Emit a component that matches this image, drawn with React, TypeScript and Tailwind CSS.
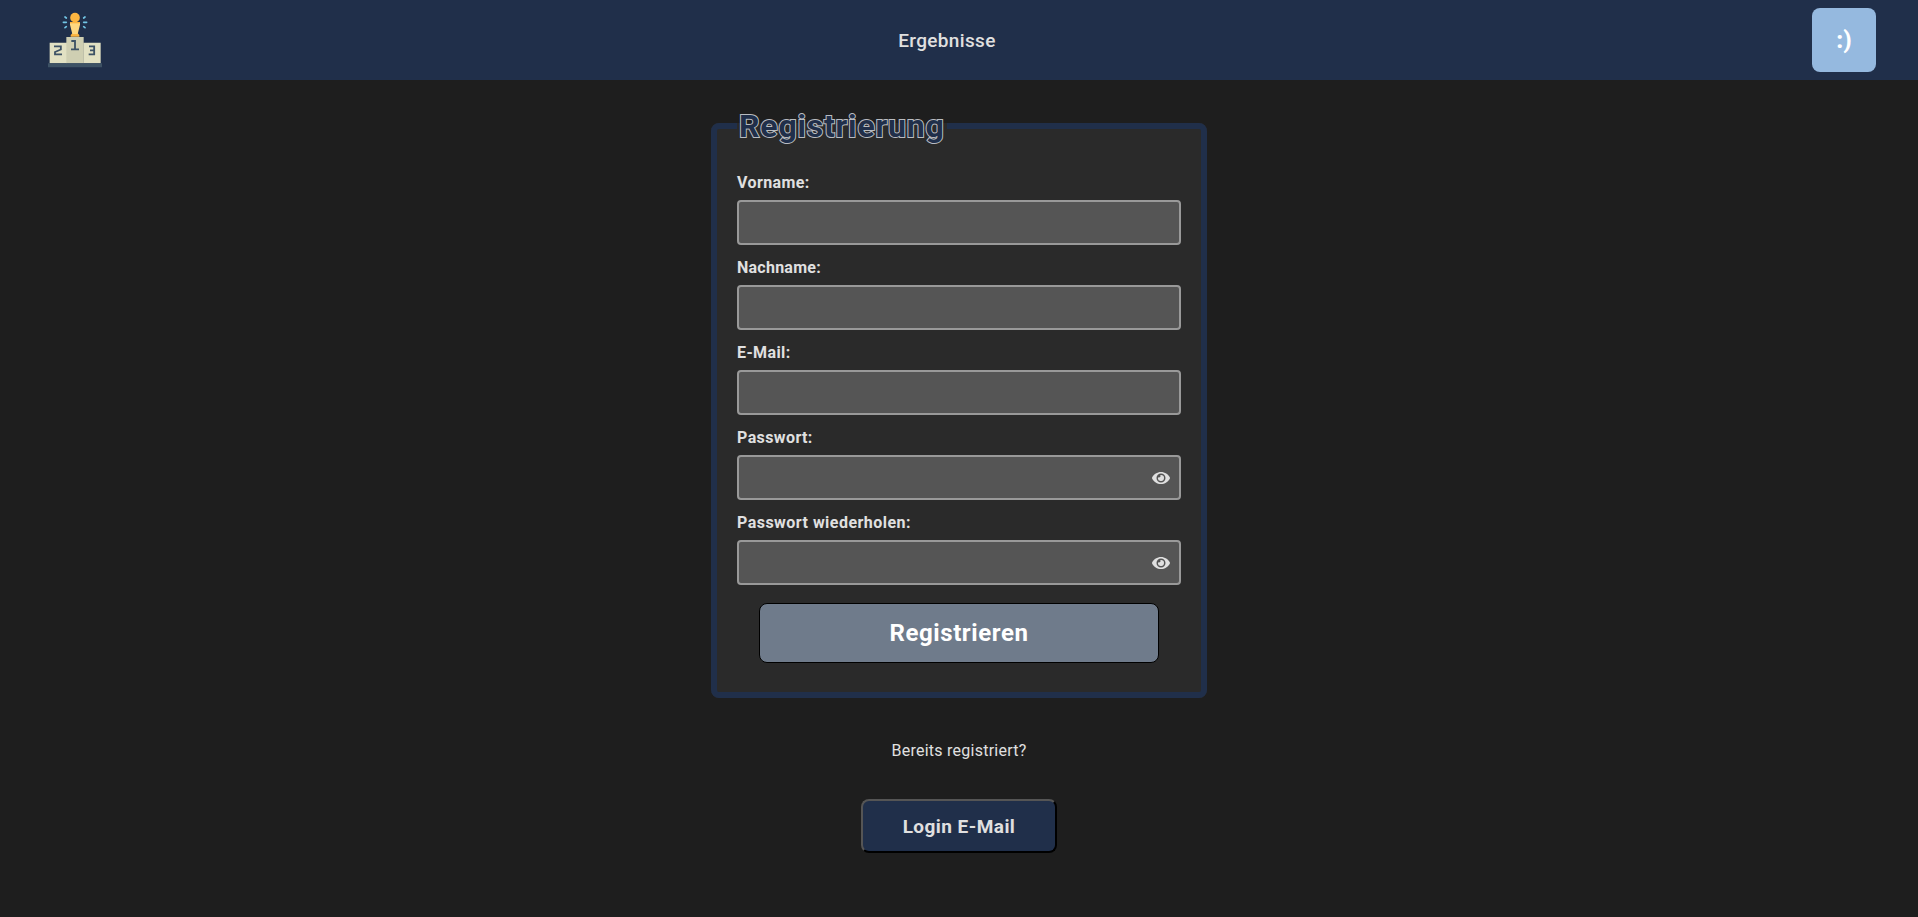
import { FaEye } from "react-icons/fa";

const fields = [
  { label: "Vorname:", spacing: "tracking-[0.4px]", secret: false },
  { label: "Nachname:", spacing: "tracking-[0.25px]", secret: false },
  { label: "E-Mail:", spacing: "tracking-[0.4px]", secret: false },
  { label: "Passwort:", spacing: "tracking-[0.4px]", secret: true },
  { label: "Passwort wiederholen:", spacing: "tracking-[0.47px]", secret: true },
];

function Logo() {
  return (
    <svg className="h-14 w-[54px]" viewBox="24 36 162 168" fill="none">
      <path fill="#fdb641" d="M92 110v-5l5-5h16l5 5v5z" />
      <path fill="#ffd880" d="M90 66h30v8l-7 28H97l-7-28z" />
      <path fill="#fdb641" d="M90 66h30v4H90z" />
      <circle cx="105" cy="53" r="14.5" fill="#fdb641" />
      <path
        stroke="#72c6e5"
        strokeWidth="5"
        strokeLinecap="round"
        d="m75 51 4 3m-9 13h9m-4 16 4-3M135 51l-4 3m9 13h-9m4 16-4-3"
      />
      <path fill="#e2e1c3" d="M29 128h52v62H29zM130 128h52v62h-52z" />
      <path fill="#cfcfb2" d="M79 111h52v79H79z" />
      <path fill="#3d5265" d="M24 190h162v12H24z" />
      <path
        stroke="#3d5265"
        strokeWidth="5.5"
        d="M42 139h20.500v9.500L45 156v7h21M94 123h11v25m-12 0h24M147 139h15.500v24H146m4-12h12"
      />
    </svg>
  );
}

function Header() {
  return (
    <header className="grid h-20 grid-cols-[1fr_auto_1fr] items-center bg-[#202f4a] pr-[42px] pl-12">
      <Logo />
      <a href="#" className="-translate-x-[15px] pt-0.5 text-[19px] font-medium tracking-[0.35px]">
        Ergebnisse
      </a>
      <button className="size-16 justify-self-end rounded-lg bg-[#95b9df] text-2xl font-extrabold text-white">
        :)
      </button>
    </header>
  );
}

export default function App() {
  return (
    <div className="min-h-screen bg-[#1e1e1e] font-['Roboto',sans-serif] text-[#e0e0e0]">
      <Header />
      <main className="flex flex-col items-center pt-[21px]">
        <fieldset className="h-[597px] w-[496px] rounded-lg border-6 border-[#202f4a] bg-[#2a2a2a] px-5">
          <legend className="h-[50px] w-[210px] px-0.5 text-[32px] leading-[50px] font-bold tracking-[0.8px] whitespace-nowrap text-[#202f4a] [-webkit-text-stroke:2px_#b9bcc1] [paint-order:stroke_fill]">
            Registrierung
          </legend>
          <div className="flex flex-col gap-[11px] pt-5">
            {fields.map((field) => (
              <label key={field.label} className="flex flex-col gap-[5px]">
                <span className={`h-6 text-base leading-6 font-bold ${field.spacing}`}>
                  {field.label}
                </span>
                <span className="flex h-[45px] items-center rounded border-2 border-[#999] bg-[#555] pr-[9px]">
                  <input
                    type={field.secret ? "password" : "text"}
                    className="h-full min-w-0 flex-1 bg-transparent px-2 outline-none"
                  />
                  {field.secret && <FaEye className="size-[18px]" />}
                </span>
              </label>
            ))}
          </div>
          <div className="flex justify-center pt-[18px]">
            <button className="h-[60px] w-[400px] rounded-lg border border-black bg-[#6f7b8b] text-2xl font-bold tracking-[0.6px] text-white">
              Registrieren
            </button>
          </div>
        </fieldset>
        <p className="mt-10 h-[25px] text-base leading-[25px] tracking-[0.25px]">Bereits registriert?</p>
        <button className="mt-9 h-[54px] w-[196px] rounded-lg border-2 border-t-[#555] border-r-black border-b-black border-l-[#555] bg-[#202f4a] pt-0.5 text-[19px] font-bold tracking-[0.45px]">
          Login E-Mail
        </button>
      </main>
    </div>
  );
}
